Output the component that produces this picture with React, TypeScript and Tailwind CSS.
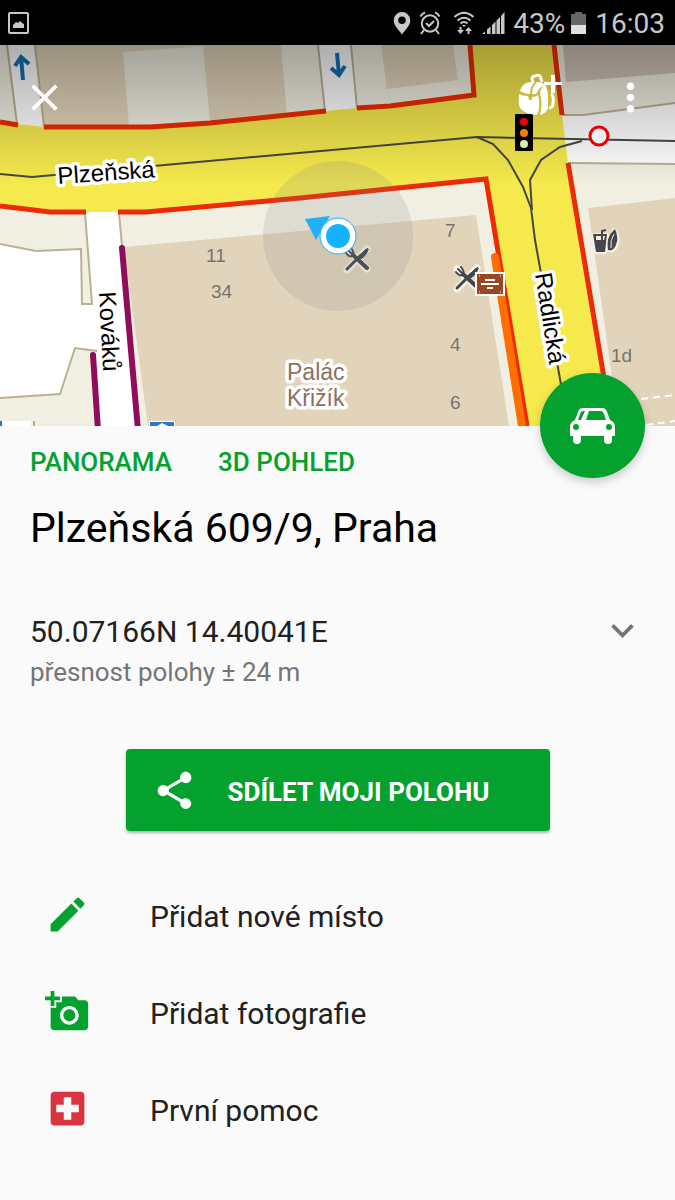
import React from 'react';
import { MdAddAPhoto, MdClose, MdEdit, MdExpandMore, MdLocalHospital, MdMoreVert, MdShare } from 'react-icons/md';

const actions = [
    { label: 'Přidat nové místo', icon: MdEdit, color: 'text-[#04a12f]' },
    { label: 'Přidat fotografie', icon: MdAddAPhoto, color: 'text-[#04a12f]' },
    { label: 'První pomoc', icon: MdLocalHospital, color: 'text-[#d9343f]' },
];

function StatusBar() {
    return (
        <header className="flex h-[45px] items-center justify-between bg-black pr-[10px] pl-2 text-[#c8c8c8]">
            <svg width="22" height="22" viewBox="0 0 22 22" fill="none">
                <rect x="1" y="1" width="19" height="20" rx="1" stroke="currentColor" strokeWidth="2" />
                <path d="M5 16v-3l3-3 2 1 2-2 2 2 2 1v4z" fill="currentColor" />
            </svg>
            <div className="flex items-center text-[28px] leading-[45px]">
                <svg width="18" height="24" viewBox="0 0 18 24" fill="currentColor">
                    <path fillRule="evenodd" d="M9 1a8.300 8.300 0 0 0-8.300 8.300C.7 15 6 19 9 23.500 12 19 17.300 15 17.300 9.300A8.300 8.300 0 0 0 9 1zm0 4.500a3.800 3.800 0 1 1 0 7.600 3.800 3.800 0 0 1 0-7.600z" />
                </svg>
                <svg className="ml-2" width="22" height="24" viewBox="0 0 22 24" fill="none" stroke="currentColor" strokeWidth="2">
                    <circle cx="11" cy="12.500" r="8.200" />
                    <path d="M7 12l3 3 5-5M5 19l-3 4M17 19l3 4" />
                    <path d="M1.500 5.500Q3 2.500 6 1.500M20.500 5.500Q19 2.500 16 1.500" />
                </svg>
                <svg className="ml-3" width="22" height="24" viewBox="0 0 22 24" fill="none" stroke="currentColor" strokeWidth="2">
                    <path d="M1.500 6Q11-2.500 20.500 6M4.500 9.500Q11 4 17.500 9.500M7.500 12.500Q11 9.500 14.500 12.500" />
                    <path d="M9 14h4l-2 2z" fill="currentColor" stroke="none" />
                    <path d="M7.500 16v4M15.500 19v4" />
                    <path d="M4 19h7l-3.500 4zM12 20h7l-3.500-4z" fill="currentColor" stroke="none" />
                </svg>
                <svg className="ml-[6px]" width="24" height="24" viewBox="0 0 24 24" fill="currentColor">
                    <path d="M1 23l3-2.500V23zM6 18.500l3.500-3V23H6zM11 14l3.500-3.500V23H11zM15.500 9.500L19 6v17h-3.500zM20 5l3.500-4v22H20z" />
                </svg>
                <span className="ml-2 pt-0.5">43%</span>
                <svg className="ml-1" width="20" height="24" viewBox="0 0 20 24">
                    <path d="M2 3h4V1h7v2h4v11H2z" fill="#666" />
                    <path d="M2 14h15v9H2z" fill="#e0e0e0" />
                </svg>
                <time className="ml-[6px] pt-0.5">16:03</time>
            </div>
        </header>
    );
}

function Cutlery({ x, y }: { x: number; y: number }) {
    return (
        <g transform={`translate(${x} ${y})`} fill="none" strokeLinecap="round">
            <path d="M-10 11L10-10M-10-9L10 10" stroke="#fff" strokeOpacity="0.7" strokeWidth="7" />
            <g stroke="#43464b">
                <path d="M-10 10L4-4" strokeWidth="3" />
                <path d="M1-2L8-9Q12-12 11-9Q10-4 4 0z" strokeWidth="1" fill="#43464b" />
                <path d="M-4-4L10 9" strokeWidth="4" />
                <path d="M-11-6Q-7-1-4-3Q-2-6-6-11M-9-9L-4-4" strokeWidth="2" />
            </g>
        </g>
    );
}

function StreetMap() {
    return (
        <svg className="block h-full w-full" viewBox="0 45 675 381" preserveAspectRatio="xMidYMid slice" role="img" aria-label="Mapa">
            <defs>
                <linearGradient id="shade" x1="0" y1="0" x2="0" y2="1">
                    <stop offset="0" stopColor="#000" stopOpacity="0.32" />
                    <stop offset="1" stopColor="#000" stopOpacity="0" />
                </linearGradient>
            </defs>
            <rect y="45" width="675" height="381" fill="#f1efe1" />

            {/* buildings */}
            <g fill="#e2d4ba">
                <path d="M36 45H281L287 116L210 122L129 126H44z" />
                <path d="M381 45H453L458 80L387 89z" />
                <path d="M563 45H675V73L566 82z" fill="#cfc3b7" />
                <path d="M124 247L476 215L509 426H148z" />
                <path d="M588 208L675 198V426H619z" />
            </g>
            <path d="M123 52L203 46L210 122L129 126z" fill="#f1efe1" />

            {/* side streets */}
            <g fill="#fff">
                <path d="M7 45H35L44 130H18z" />
                <path d="M318 45H351L357 112H326z" />
                <path d="M560 115L583 114L675 103V164H564z" />
                <path d="M86 210H118L122 246L141 426H97L92 351L75 348L60 394L0 398V244L36 251L81 249L82 304H92z" />
            </g>
            <g fill="none" stroke="#bcb094" strokeWidth="2">
                <path d="M7 45L17 124M35 45L44 127M318 45L325 112M351 45L357 108" />
                <path d="M562 115H583L675 103M568 163L675 164" />
                <path d="M85 213L92 304H82L81 249L36 251L0 244M119 213L122 246M97 351L75 348L60 394L0 398M34 421V426" />
            </g>

            {/* main roads */}
            <path d="M0 122L18 124L44 127H150L210 123L326 111L357 108L474 95L471 45H554L562 115L568 163L612 426H526L487 178L300 198L146 212H50L0 206z" fill="#f5e94d" />
            <g fill="none" stroke="#ee2b00" strokeWidth="5">
                <path d="M0 122L18 125M44 127H150L210 123L326 111M357 108L390 106L474 95L470 45M554 45L562 115" />
                <path d="M0 206L50 212H86M118 212H146L300 198L486 179L527 426M568 163L612 426" />
            </g>
            <path d="M495 257L522 426" stroke="#ff6f00" strokeWidth="8" strokeLinecap="round" />
            <g stroke="#8f0d5b" strokeWidth="6" strokeLinecap="round">
                <path d="M122 248L138 430M93 355L98 430" />
            </g>
            <g fill="none" stroke="#484840" strokeWidth="2">
                <path d="M0 174L32 177L477 137L675 141" />
                <path d="M477 137L493 144L508 160L523 187L531 208L535 240L562 390" />
                <path d="M532 210L530 180L541 160L560 147L582 141" />
            </g>
            <path d="M641 399L675 395M646 425L675 421" stroke="#fff" strokeWidth="2" strokeDasharray="7 5" />

            {/* one-way arrows */}
            <g fill="none" stroke="#1470b4" strokeWidth="4">
                <path d="M23 80L21 57M15 66L21 57L29 64" />
                <path d="M337 53L339 75M331 68L339 75L345 66" />
            </g>

            {/* stops at the bottom edge */}
            <path d="M149 421H175V426H149z" fill="#fff" />
            <path d="M0 421H2V426H0zM150 422H174V426H150z" fill="#2777c4" />
            <path d="M2 421H31V426H2zM157 426L162 423L168 426z" fill="#fff" />

            <g fontSize="19" fill="#777471" fontFamily='"Liberation Sans", Arial, sans-serif'>
                <text x="206" y="262">11</text>
                <text x="211" y="298">34</text>
                <text x="445" y="237">7</text>
                <text x="450" y="351">4</text>
                <text x="450" y="409">6</text>
                <text x="611" y="362">1d</text>
            </g>

            <Cutlery x={357} y={259} />
            <Cutlery x={467} y={278} />
            <rect x="476" y="273" width="28" height="22" fill="#9a4623" stroke="#fff" strokeWidth="2" />
            <path d="M485 280H495M481 284H499M487 288H493" stroke="#fff" strokeWidth="2" />
            <path d="M479 276h1M500 276h1M479 292h1M500 292h1" stroke="#fff" />
            <g stroke="#fff" strokeOpacity="0.7" strokeWidth="4" strokeLinejoin="round" fill="none">
                <path d="M594 235H607L605 252H596zM610 249Q610 239 614 230Q620 239 616 246Q613 252 609 250z" />
            </g>
            <path d="M593 234H607L605 252H596z" fill="#43464b" />
            <path d="M596 236H605L604 240H596z" fill="#f4eee0" />
            <path d="M602 241V231L606 230" fill="none" stroke="#43464b" strokeWidth="2" />
            <path d="M608 250Q606 237 613 231L615 229Q619 238 616 245Q613 252 608 250z" fill="#43464b" />
            <path d="M611 248Q610 240 614 234" fill="none" stroke="#f4eee0" strokeWidth="1" />

            <circle cx="338" cy="236" r="75" fill="#78828a" fillOpacity="0.17" />
            <path d="M305 219L330 216L316 240z" fill="#22b0fb" />
            <circle cx="338" cy="236" r="18" fill="#fff" stroke="#22b0fb" strokeWidth="1" />
            <circle cx="338" cy="236" r="12" fill="#14b3ff" />

            <rect y="45" width="675" height="140" fill="url(#shade)" />

            <g stroke="#fff" strokeWidth="7" strokeLinejoin="round" paintOrder="stroke" fontFamily='"Liberation Sans", Arial, sans-serif'>
                <g fontSize="23" fill="#8b715e">
                    <text x="287" y="380">Palác</text>
                    <text x="287" y="406">Křižík</text>
                </g>
                <g fontSize="24" fill="#000">
                    <text transform="translate(58 184) rotate(-4)">Plzeňská</text>
                    <text transform="translate(99 292) rotate(87)">Kováků</text>
                    <text transform="translate(535 274) rotate(81)">Radlická</text>
                </g>
            </g>

            <rect x="515" y="114" width="18" height="37" rx="1" />
            <circle cx="524" cy="122" r="4" fill="#f00000" />
            <circle cx="524" cy="133" r="4" fill="#f48000" />
            <circle cx="524" cy="144" r="4" fill="#d2ecbc" />
            <circle cx="599" cy="136" r="9" fill="#f0f0f0" stroke="#e80008" strokeWidth="3" />
        </svg>
    );
}

function BackpackIcon() {
    return (
        <svg width="46" height="46" viewBox="0 0 46 46" fill="#fff">
            <path d="M17 8L16 5Q16 2 19 2L22 1Q25 2 25 5L26 8" fill="none" stroke="#fff" strokeWidth="3" />
            <path d="M4 17Q6 8 16 8L19 8Q14 12 14 20Q8 20 4 17z" />
            <path d="M21 8Q27 8 30 12Q31 15 32 20V34Q31 39 24 41Q27 29 24 20Q24 14 28 12Q23 13 21 19Q19 21 16 20Q16 12 21 8z" />
            <path d="M3 20Q7 22 12 22L13 26H16V23Q20 23 22 21Q25 31 21 41Q9 40 4 34Q2 29 3 20z" />
            <path d="M35 20Q38 22 37 29Q37 34 33 34" fill="none" stroke="#fff" strokeWidth="3" />
            <path d="M35 1h4v7h7v3h-7v8h-4v-8h-7V8h7z" />
        </svg>
    );
}

function CarIcon() {
    return (
        <svg width="45" height="36" viewBox="0 0 45 36" fill="#fff">
            <path fillRule="evenodd" d="M13 0H32Q36 0 37 4L40 12Q45 14 45 19V28H42V32Q42 36 38 36Q34 36 34 32V28H11V32Q11 36 7 36Q3 36 3 32V28H0V19Q0 14 5 12L8 4Q9 0 13 0zM13 3Q11 3 10 6L8 12H11L15 3zM19 3L16 12H36L34 6Q33 3 31 3zM6 16A3 3 0 1 0 6 22A3 3 0 1 0 6 16zM39 16A3 3 0 1 0 39 22A3 3 0 1 0 39 16z" />
        </svg>
    );
}

export default function App() {
    return (
        <div className="min-h-screen bg-[#fafafa] font-[Roboto,sans-serif] text-[#212121]">
            <StatusBar />

            <section className="relative h-[381px]">
                <StreetMap />
                <div className="absolute inset-x-0 top-[29px] flex items-center px-[22px] text-white">
                    <button type="button" aria-label="Zavřít" className="mr-auto"><MdClose size={45} /></button>
                    <button type="button" aria-label="Přidat do batohu" className="mr-[46px]"><BackpackIcon /></button>
                    <button type="button" aria-label="Další možnosti"><MdMoreVert size={45} /></button>
                </div>
                <button type="button" aria-label="Trasa autem" className="absolute right-[30px] -bottom-[52px] flex h-[105px] w-[105px] items-center justify-center rounded-full bg-[#04a12f] shadow-[0_4px_10px_rgba(0,0,0,0.2)]">
                    <CarIcon />
                </button>
            </section>

            <main className="px-[30px] pt-4">
                <div className="flex gap-[46px] text-[26px] leading-10 font-medium text-[#04a12f]">
                    <button type="button">PANORAMA</button>
                    <button type="button">3D POHLED</button>
                </div>
                <h1 className="mt-[18px] text-[41px] leading-[56px] text-black">Plzeňská 609/9, Praha</h1>

                <div className="mt-14 flex items-start justify-between">
                    <div>
                        <p className="text-[30px] leading-10">50.07166N 14.40041E</p>
                        <p className="text-[26px] leading-10 text-[#757575]">přesnost polohy ± 24 m</p>
                    </div>
                    <button type="button" aria-label="Zobrazit více" className="-mt-1 text-[#757575]"><MdExpandMore size={45} /></button>
                </div>

                <button type="button" className="mx-auto mt-[57px] flex h-[82px] w-full max-w-[424px] items-center rounded-[4px] bg-[#04a12f] px-[26px] text-[26px] font-bold text-white shadow-[0_2px_3px_rgba(0,0,0,0.3)]">
                    <MdShare size={45} className="mr-[31px]" />
                    <span className="pt-1">SDÍLET MOJI POLOHU</span>
                </button>

                <ul className="mt-[35px]">
                    {actions.map(({ label, icon: Icon, color }) => (
                        <li key={label}>
                            <button type="button" className="flex h-[97px] w-full items-center gap-[60px] px-[15px] text-left text-[30px]">
                                <Icon size={45} className={color} />
                                <span className="pt-1">{label}</span>
                            </button>
                        </li>
                    ))}
                </ul>
            </main>
        </div>
    );
}
